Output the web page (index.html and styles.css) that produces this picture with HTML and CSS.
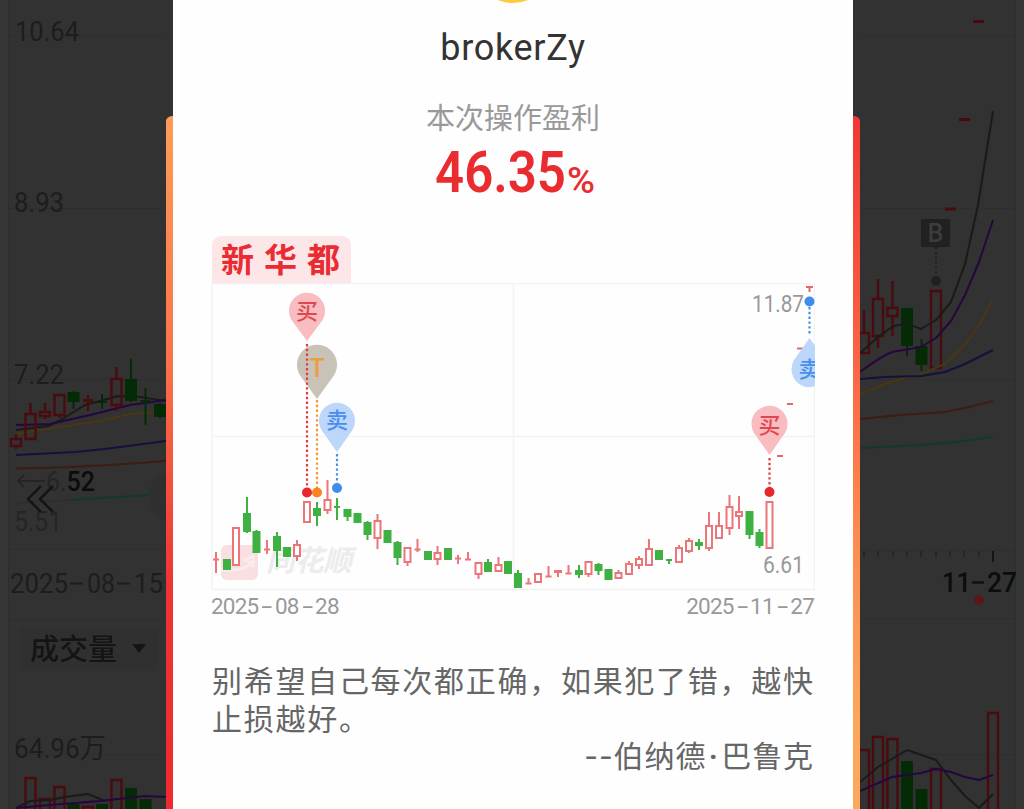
FILE: index.html
```
<!DOCTYPE html>
<html lang="zh-CN">
<head>
  <meta charset="UTF-8" />
  <meta name="viewport" content="width=device-width, initial-scale=1.0"/>
  <title>新华都 - 本次操作盈利</title>
  <link rel="stylesheet" href="styles.css">
</head>
<body>

  <div class="screen">
    <!-- Dimmed K-line page, left part -->
    <svg class="backdrop" width="166" height="809" viewBox="0 0 166 809">
      <rect class="page-edge" x="0" y="0" width="8" height="809"/>
      <path class="bg-grid" d="M8.500 0V809M8 36.500H166M8 208.500H166M8 379.500H166M8 549.500H166M8 619.500H166M8 754.500H166"/>
      <rect class="select" x="19" y="627" width="139" height="43" rx="3"/>
      <g class="bg-label">
        <text x="15" y="41" textLength="64" lengthAdjust="spacingAndGlyphs">10.64</text>
        <text x="14" y="212" textLength="50" lengthAdjust="spacingAndGlyphs">8.93</text>
        <text x="14" y="384" textLength="50" lengthAdjust="spacingAndGlyphs">7.22</text>
        <text x="14" y="531" textLength="48" lengthAdjust="spacingAndGlyphs" class="faint">5.51</text>
        <text x="46" y="491" textLength="49" lengthAdjust="spacingAndGlyphs" class="faint">6.<tspan class="strong">52</tspan></text>
        <text x="10" y="593" textLength="58" lengthAdjust="spacingAndGlyphs">2025</text>
        <text x="87" y="593" textLength="28" lengthAdjust="spacingAndGlyphs">08</text>
        <text x="134" y="593" textLength="29" lengthAdjust="spacingAndGlyphs">15</text>
        <text x="14" y="758" textLength="92" lengthAdjust="spacingAndGlyphs">64.96<tspan class="cn thin">万</tspan></text>
        <text x="30" y="660" class="cn">成交量</text>
      </g>
      <path class="bg-dash" d="M70 583.500H83M117 583.500H130"/>
      <path d="M132 644H146L139 653Z" fill="#151515"/>
      <g class="bg-lines">
        <path class="teal faint-line" d="M16 503L70 500"/>
        <path class="gray" d="M16 430L48 426L59 421L85 405L100 401L118 396L140 397L166 401"/>
        <path class="purple" d="M16 425L50 424L90 415L130 405L166 400"/>
        <path class="gold" d="M16 434L60 427L100 421L130 414L166 412"/>
        <path class="blue" d="M16 455L75 452L105 449L166 441"/>
        <path class="brown" d="M16 468.500L60 467.500L110 465L166 461"/>
        <path class="teal" d="M70 500L150 495"/>
      </g>
      <g id="klineLeft" class="bg-candles"></g>
      <g id="volumeLeft" class="bg-candles"></g>
      <g class="bg-lines">
        <path class="gray" d="M16 808L30 801L50 800L65 797L88 794L105 801"/>
        <path class="purple" d="M16 808L50 805L100 801L145 796L166 797"/>
      </g>
      <circle cx="174" cy="497" r="25" fill="#2f2f2f"/>
      <path d="M45 481H18M24 475L18 481L24 487" fill="none" stroke="#222" stroke-width="1.500"/>
      <path d="M41 486L28 499L41 512M53 486L40 499L53 512" fill="none" stroke="#151515" stroke-width="2.500"/>
    </svg>

    <div class="ribbon ribbon-left"></div>

    <!-- Share card -->
    <main class="card">
      <div class="avatar"></div>
      <h1>brokerZy</h1>
      <p class="caption">本次操作盈利</p>
      <svg class="profit" width="604" height="97" viewBox="211 139 604 97">
        <text class="num" x="435" y="192" textLength="131" lengthAdjust="spacingAndGlyphs">46.35</text>
        <text class="unit" x="567" y="192.500" textLength="28" lengthAdjust="spacingAndGlyphs">%</text>
      </svg>

      <div class="stock">新华都</div>
      <svg class="chart" width="604" height="308" viewBox="211 283 604 308">
        <path class="grid" d="M212 283.500H814.500V589.500H212ZM513.500 283V590M212 436.500H814"/>

        <!-- Watermark -->
        <rect x="221" y="545" width="37" height="35" rx="6" fill="#f9dfe1"/>
        <path d="M221 570C234 571 247 569 251 563L245 560L253 556V567" fill="none" stroke="#fcebed" stroke-width="3"/>
        <text class="watermark" x="266" y="571" textLength="86" lengthAdjust="spacingAndGlyphs">同花顺</text>

        <g id="kline" class="candles"></g>
        <path class="limit" d="M777 456H783M787 404H793M797 348.500H803M806 287H813M809.500 287V292"/>

        <path d="M317 399L300.500 376A20 20 0 1 1 333.500 376Z" fill="#c9c2b7"/>
        <path class="pin-red" d="M307 341L291.500 320A18 18 0 1 1 322.500 320Z"/>
        <path class="pin-blue" d="M337 452L321.500 430A18 18 0 1 1 352.500 430Z"/>
        <path class="pin-red" d="M769.500 455L754 433A18 18 0 1 1 785 433Z"/>
        <path class="pin-blue" d="M809.500 338L794 360A18 18 0 1 0 825 360Z"/>

        <path class="dots" stroke="#e23a40" d="M307 344V488M769.500 458V488"/>
        <path class="dots" stroke="#f39a3d" d="M317 400V488"/>
        <path class="dots" stroke="#4a8fe6" d="M337 454V483M809.500 307V334"/>
        <circle cx="307" cy="492.500" r="5" fill="#e8262d"/>
        <circle cx="317" cy="492.500" r="5" fill="#fb8420"/>
        <circle cx="337" cy="488" r="5" fill="#3f8cec"/>
        <circle cx="769.500" cy="492" r="5" fill="#e8262d"/>
        <circle cx="809.500" cy="301.500" r="5" fill="#3f8cec"/>

        <text class="pin-text" x="307" y="319" fill="#e2474e">买</text>
        <text class="pin-text wide" x="317" y="377" fill="#e6a040">T</text>
        <text class="pin-text" x="337" y="428" fill="#4a8eee">卖</text>
        <text class="pin-text" x="769.500" y="433" fill="#e2474e">买</text>
        <text class="pin-text" x="809.500" y="377" fill="#4a8eee">卖</text>

        <text class="price" x="752" y="312" textLength="52" lengthAdjust="spacingAndGlyphs">11.87</text>
        <text class="price" x="763" y="573" textLength="41" lengthAdjust="spacingAndGlyphs">6.61</text>
      </svg>
      <div class="dates">
        <span>2025<i>-</i>08<i>-</i>28</span>
        <span>2025<i>-</i>11<i>-</i>27</span>
      </div>

      <blockquote>
        别希望自己每次都正确，如果犯了错，越快止损越好。
        <footer><span>--</span>伯纳德<b>·</b>巴鲁克</footer>
      </blockquote>
    </main>

    <div class="ribbon ribbon-right"></div>

    <!-- Dimmed K-line page, right part -->
    <svg class="backdrop" width="164" height="809" viewBox="860 0 164 809">
      <rect class="page-edge" x="1016" y="0" width="8" height="809"/>
      <path class="bg-grid" d="M1015.500 0V809M860 36.500H1015M860 208.500H1015M860 379.500H1015M860 550.500H1015M860 618.500H1015M860 754.500H1015"/>
      <path class="ticks" d="M864 551V557M878 551V557M893 551V557M907 551V557M921 551V557M936 551V557M950 551V557M964 551V557M979 551V557"/>
      <path d="M993 551V562" stroke="#151515" stroke-width="2"/>
      <g id="klineRight" class="bg-candles"></g>
      <g id="volumeRight" class="bg-candles"></g>
      <path class="bg-limit" d="M945 209H956M959 119.500H970M973 21.500H984"/>
      <g class="bg-lines">
        <path class="gray" d="M860 353L878 337L892 327Q905 321 921 329L936 320L951 302L965 264L978 205L993 111"/>
        <path class="purple" d="M860 372Q880 357 892 352L921 347L936 338L951 321L965 295L979 262L993 220"/>
        <path class="gold" d="M860 394L890 382L921 374L945 364L965 345L979 325L993 300"/>
        <path class="blue" d="M860 379L885 377L921 376L945 372L965 364L993 350"/>
        <path class="brown" d="M860 419L900 415L945 412L965 408L993 401"/>
        <path class="teal" d="M860 448L920 445L955 442L993 437"/>
        <path class="gray" d="M860 782L878 767L907 750L936 760L951 780L965 796L979 808L993 794"/>
        <path class="purple" d="M860 791L892 777L921 773L936 769L951 772L965 777L979 780L993 775"/>
      </g>
      <path d="M923 219H948Q950 219 950 221V245Q950 247 948 247H939L936 250L933 247H923Q921 247 921 245V221Q921 219 923 219Z" fill="#212121"/>
      <text class="buy-mark" x="935.500" y="242">B</text>
      <path class="dots" stroke="#232323" d="M936 252V276"/>
      <circle cx="936" cy="281" r="5" fill="#202020"/>
      <g class="bg-label">
        <text x="942" y="592" textLength="29" lengthAdjust="spacingAndGlyphs" class="strong">11</text>
        <text x="987" y="592" textLength="30" lengthAdjust="spacingAndGlyphs" class="strong">27</text>
      </g>
      <path d="M972 582.500H984" stroke="#111" stroke-width="2.500"/>
      <circle cx="979" cy="600" r="5" fill="#5b1719"/>
    </svg>
  </div>

  <script src="chart.js"></script>
</body>
</html>
```
FILE: styles.css
```
* {
  box-sizing: border-box;
}
body {
  margin: 0;
  background: #323232;
  font-family: Roboto, 'Noto Sans CJK SC', sans-serif;
  overflow: hidden;
}
.screen {
  display: flex;
  width: 1024px;
  height: 809px;
  overflow: hidden;
}
.backdrop {
  display: block;
  flex: none;
}

/* Gradient ribbons beside the card */
.ribbon {
  flex: none;
  width: 7px;
  margin-top: 116px;
}
.ribbon-left {
  border-top-left-radius: 7px 5px;
  background: linear-gradient(#fd9d57, #fb7349 35%, #ee3434 68%, #ee2a2e);
}
.ribbon-right {
  border-top-right-radius: 7px 5px;
  background: linear-gradient(#f03834, #f8583f 27%, #fd8a50 60%, #fea65b 88%);
}

/* Card */
.card {
  flex: none;
  width: 680px;
  padding: 0 38px;
  background: #fefefe;
  text-align: center;
  overflow: hidden;
}
.avatar {
  width: 80px;
  height: 80px;
  margin: -77px auto 0;
  border-radius: 50%;
  background: #fdcb3c;
}
h1 {
  margin: 24px 0 0;
  font-size: 36px;
  font-weight: 400;
  line-height: 42px;
  letter-spacing: 0.7px;
  color: #333;
}
.caption {
  margin: 31px 0 0;
  font-size: 29px;
  line-height: 39px;
  color: #999;
}
.profit {
  display: block;
  fill: #ea2b30;
}
.profit .num {
  font-size: 58px;
  font-weight: 600;
}
.profit .unit {
  font-size: 36px;
  font-weight: 500;
}
.stock {
  width: 139px;
  height: 47px;
  margin-left: 1px;
  padding-left: 9px;
  border-radius: 9px 9px 0 0;
  background: #fde6e8;
  color: #e92c32;
  font-size: 33px;
  font-weight: 700;
  line-height: 49px;
  letter-spacing: 10px;
  text-align: left;
  white-space: nowrap;
}
.chart {
  display: block;
}
.dates {
  display: flex;
  justify-content: space-between;
  padding: 2px 1px 0 0;
  font-size: 22.5px;
  line-height: 26px;
  letter-spacing: -0.8px;
  color: #999;
}
.dates i {
  display: inline-block;
  width: 16.5px;
  text-align: center;
  font-family: Inter, sans-serif;
  font-style: normal;
  transform: scaleX(1.3);
}
blockquote {
  margin: 44px -2px 0 1px;
  font-size: 30px;
  line-height: 37.5px;
  letter-spacing: 1.72px;
  text-align: left;
  color: #666;
}
blockquote footer {
  padding-right: 3px;
  text-align: right;
  letter-spacing: 0.9px;
}
blockquote footer span {
  font-family: Inter, sans-serif;
}
blockquote b {
  display: inline-block;
  width: 15px;
  text-align: center;
}

/* Card chart */
.grid {
  fill: none;
  stroke: #f3f3f3;
  stroke-width: 1.5;
}
.watermark {
  font: italic 700 29px 'Noto Sans CJK SC', sans-serif;
  fill: #ececec;
}
.candles .up {
  fill: #fefefe;
  stroke: #ec7579;
  stroke-width: 2;
}
.candles .down {
  fill: #3eb142;
  stroke: #3eb142;
  stroke-width: 2;
}
.limit {
  fill: none;
  stroke: #e5666b;
  stroke-width: 2;
}
.pin-red {
  fill: #f9bcc0;
}
.pin-blue {
  fill: #bdd7fa;
}
.dots {
  fill: none;
  stroke-width: 2.2;
  stroke-dasharray: 2.4 2.4;
}
.pin-text {
  font: 500 22px Roboto, 'Noto Sans CJK SC', sans-serif;
  text-anchor: middle;
}
.pin-text.wide {
  font-size: 25px;
}
.price {
  font: 400 23.5px Roboto, sans-serif;
  fill: #999;
}

/* Dimmed page */
.page-edge {
  fill: #353636;
}
.select {
  fill: #303030;
}
.bg-grid {
  fill: none;
  stroke: #2e2e2e;
}
.bg-label {
  font: 400 28px Roboto, sans-serif;
  fill: #1d1d1d;
}
.bg-label .cn {
  font: 500 29px 'Noto Sans CJK SC', sans-serif;
  fill: #141414;
}
.bg-label .thin {
  font-size: 28px;
  font-weight: 400;
  fill: #1d1d1d;
}
.bg-label .faint {
  fill: #252525;
}
.bg-label .strong {
  font-weight: 500;
  fill: #0c0c0c;
}
.bg-dash {
  stroke: #1d1d1d;
  stroke-width: 2;
}
.bg-lines path {
  fill: none;
  stroke-width: 2;
  stroke-linejoin: round;
}
.bg-lines .gray {
  stroke: #1a1a1a;
}
.bg-lines .purple {
  stroke: #27063f;
}
.bg-lines .gold {
  stroke: #4a3610;
}
.bg-lines .blue {
  stroke: #13123f;
}
.bg-lines .brown {
  stroke: #3d1c12;
}
.bg-lines .teal {
  stroke: #11392e;
}
.bg-lines .faint-line {
  stroke: #2b302e;
}
.bg-candles .up {
  fill: none;
  stroke: #4b0a0e;
  stroke-width: 2.4;
}
.bg-candles .down {
  fill: #042b05;
  stroke: #042b05;
  stroke-width: 2;
}
.bg-limit {
  stroke: #480a0e;
  stroke-width: 3;
}
.ticks {
  stroke: #232323;
  stroke-width: 1.5;
}
.buy-mark {
  font: 500 25px Roboto, sans-serif;
  fill: #3c3c3c;
  text-anchor: middle;
}
```
FILE: chart.js
```
// each row: x, high, body top, body bottom, low, 1 = up / 0 = down
const kline = [
  [216, 552, 559, 560, 573, 1], [227, 559, 559, 570, 570, 0], [236, 527, 527, 566, 566, 1],
  [247, 497, 513, 532, 533, 0], [256.5, 530, 531, 553, 553, 0], [267, 540, 549, 550, 554, 1],
  [277, 532, 536, 551, 567, 0], [287, 547, 547, 557, 557, 0], [297, 540, 544, 557, 561, 1],
  [307, 501, 501, 523, 523, 1], [317, 502, 508, 516, 526, 0], [327.5, 480, 499, 511, 514, 1],
  [337, 498, 506, 508, 520, 0], [347.5, 509, 509, 517, 521, 0], [357.5, 513, 513, 523, 523, 0],
  [367.5, 521, 522, 535, 540, 0], [377.5, 514, 520, 539, 549, 1], [387.5, 530, 530, 543, 543, 0],
  [397.5, 541, 542, 558, 565, 0], [407.5, 547, 547, 563, 566, 1], [417.5, 539, 549, 550, 552, 1],
  [428, 551, 551, 560, 560, 0], [437.5, 546, 552, 560, 565, 1], [448, 548, 548, 560, 560, 0],
  [458, 555, 558, 559, 564, 1], [468, 552, 559, 560, 560, 1], [478.5, 562, 562, 575, 579, 1],
  [488, 559, 562, 572, 572, 0], [498.5, 557, 564, 572, 572, 1], [508, 561, 561, 574, 574, 0],
  [518, 570, 573, 588, 588, 0], [528.5, 578, 583, 584, 584, 1], [538, 573, 573, 583, 583, 1],
  [548.5, 566, 576, 577, 577, 1], [558, 570, 570, 573, 577, 1], [568.5, 565, 573, 574, 574, 1],
  [579, 565, 570, 575, 578, 0], [588.5, 561, 561, 575, 577, 1], [598.5, 563, 564, 571, 575, 0],
  [608.5, 569, 569, 580, 580, 0], [618.5, 570, 572, 579, 579, 1], [629, 561, 563, 575, 575, 1],
  [639, 556, 558, 566, 569, 1], [649, 539, 548, 566, 566, 1], [659, 550, 550, 560, 560, 0],
  [669, 559, 559, 561, 564, 0], [679, 545, 547, 563, 563, 1], [689, 538, 540, 552, 553, 1],
  [699, 539, 542, 546, 550, 0], [709, 512, 525, 549, 551, 1], [719, 512, 525, 539, 539, 1],
  [729.5, 495, 506, 529, 535, 1], [739, 496, 511, 517, 529, 1], [749.5, 511, 511, 535, 539, 0],
  [759.5, 529, 532, 546, 548, 0], [769.5, 501, 501, 549, 549, 1]
];

const klineLeft = [
  [16, 434, 438, 447, 449, 1], [30.5, 403, 413, 440, 440, 1], [45, 403, 411, 417, 419, 1],
  [59.5, 394, 394, 416, 418, 1], [73.5, 391, 392, 402, 409, 0], [88, 395, 400, 401, 411, 1],
  [102, 394, 401, 403, 409, 0], [116.5, 367, 378, 406, 411, 1], [131, 359, 379, 401, 402, 0],
  [145.5, 388, 400, 402, 425, 0], [160, 403, 404, 417, 418, 0]
];
const klineRight = [
  [864, 310, 332, 354, 354, 1], [878, 279, 298, 337, 348, 1], [892.5, 281, 307, 317, 336, 1],
  [907, 308, 308, 346, 356, 0], [921.5, 339, 346, 365, 371, 0], [936, 290, 290, 369, 369, 1]
];

// volume rows: x, top, 1 = up / 0 = down
const volumeLeft = [
  [30.5, 777, 1], [45, 798, 1], [59.5, 786, 1], [73.5, 804, 0], [88, 806, 1],
  [102, 804, 0], [116.5, 779, 1], [131, 788, 0], [145.5, 799, 0]
];
const volumeRight = [
  [864, 749, 1], [878, 736, 1], [892.5, 738, 1], [907, 761, 0],
  [921.5, 789, 0], [936, 768, 1], [993, 712, 1]
];

function drawCandles(id, rows, width) {
  const half = width / 2 - 1;
  document.getElementById(id).innerHTML = rows.map(([x, high, top, bottom, low, up]) => {
    // a flat body becomes a single horizontal stroke
    const body = bottom - top < 3
      ? `M${x - half} ${(top + bottom) / 2}H${x + half}`
      : `M${x - half} ${top + 1}H${x + half}V${bottom - 1}H${x - half}Z`;
    return `<path class="${up ? 'up' : 'down'}" d="M${x} ${high}V${top}M${x} ${bottom}V${low}${body}"/>`;
  }).join('');
}

function toBars(rows) {
  return rows.map(([x, top, up]) => [x, top, top, 820, 820, up]);
}

drawCandles('kline', kline, 8);
drawCandles('klineLeft', klineLeft, 12);
drawCandles('klineRight', klineRight, 12);
drawCandles('volumeLeft', toBars(volumeLeft), 12);
drawCandles('volumeRight', toBars(volumeRight), 12);
```
